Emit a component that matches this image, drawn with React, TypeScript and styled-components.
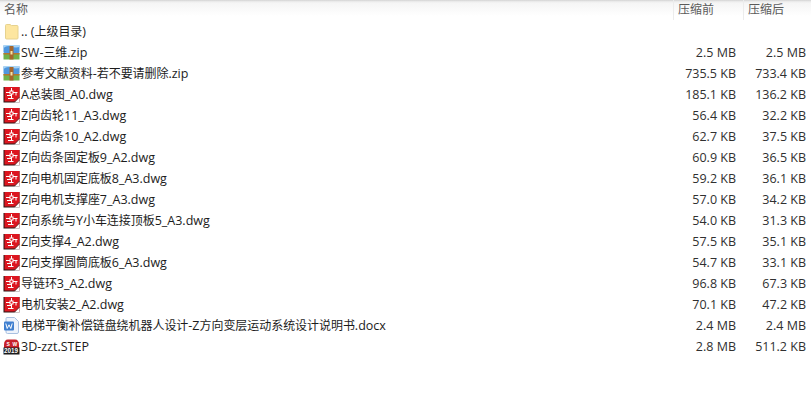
import React from "react";
import styled, { createGlobalStyle } from "styled-components";

const Global = createGlobalStyle`
  html, body { margin: 0; padding: 0; background: #fff; }
  body { font-family: "Open Sans", "Noto Sans CJK SC", sans-serif; }
`;

const Page = styled.div`
  width: 811px;
  height: 416px;
  overflow: hidden;
  background: #fff;
`;

const Header = styled.div`
  display: grid;
  grid-template-columns: 673px 70px 68px;
  height: 20px;
  background: linear-gradient(#cfcfcf 0, #e6e6e6 1px, #f5f5f5 3px, #fff 16px);
  color: #5a5a5a;
  font-size: 12px;
  line-height: 19px;
`;

const HeadCell = styled.div<{ $first?: boolean }>`
  padding-left: 4px;
  border-left: ${(p) => (p.$first ? "none" : "1px solid #ececec")};
`;

const List = styled.div`
  padding-top: 1px;
`;

const Row = styled.div`
  display: grid;
  grid-template-columns: 673px 63px 70px;
  height: 21px;
  line-height: 21px;
  font-size: 12.5px;
  color: #1c1c1c;
  white-space: nowrap;
`;

const NameCell = styled.div`
  display: flex;
  align-items: center;
  gap: 1px;
  padding-left: 3px;
`;

const Name = styled.span``;

const Han = styled.span`
  font-size: 12px;
  letter-spacing: -0.05px;
`;

const IconSlot = styled.svg`
  width: 17px;
  height: 17px;
  flex: none;
`;

const Size = styled.div`
  text-align: right;
  color: #303030;
`;

function FolderIcon() {
  return (
    <IconSlot viewBox="0 0 17 17">
      <path d="M2.5 2.5 a1 1 0 0 1 1-1 h3.5 l1.5 1 H14 a1 1 0 0 1 1 1 V15 a1 1 0 0 1-1 1 H3.5 a1 1 0 0 1-1-1 z" fill="#fde6a0" stroke="#e6d28f" />
    </IconSlot>
  );
}

function ZipIcon() {
  return (
    <IconSlot viewBox="0 0 17 17">
      <rect x="0.5" y="1" width="16" height="8" rx="1" fill="#4f97de" />
      <path d="M0.5 4 Q4 1 8 2.5 T16.5 3 V1 H0.5z" fill="#a9d4f5" />
      <rect x="0.5" y="9" width="16" height="6.5" fill="#6fb24b" />
      <rect x="0.5" y="9" width="16" height="1.5" fill="#b4772f" />
      <rect x="6.5" y="2" width="4" height="13.5" fill="#a5662c" />
      <rect x="7.5" y="7" width="2" height="3.5" fill="#f4e3a8" />
    </IconSlot>
  );
}

function DwgIcon() {
  return (
    <IconSlot viewBox="0 0 17 17">
      <rect x="0.5" y="1" width="16" height="15.5" fill="#2a1414" />
      <rect x="1.5" y="1" width="15" height="14.5" fill="#dc1620" />
      <path d="M8.5 2 V5 M8.5 8 V12.5 M3 6.5 H7 M10 6.5 H14.5 M5 12.5 H10.500 M13 6.5 V9.500 M4 9.500 H8.500" stroke="#fff" strokeWidth="1" fill="none" />
      <rect x="7" y="5" width="3" height="3" fill="none" stroke="#fff" strokeWidth="1" />
      <path d="M11.5 16.5 L16.5 11.5 V16.5z" fill="#fff" />
      <path d="M11.5 16 L16.5 11" stroke="#444" strokeWidth="0.8" />
    </IconSlot>
  );
}

function DocIcon() {
  return (
    <IconSlot viewBox="0 0 17 17">
      <path d="M3 1.5 a1 1 0 0 1 1-1 H11.5 L15.5 4.5 V15 a1.5 1.5 0 0 1-1.5 1.5 H4.5 a1.5 1.5 0 0 1-1.5-1.5z" fill="#eef3fb" stroke="#a9c0e0" />
      <rect x="1" y="4.5" width="10" height="9" rx="1" fill="#3f7fd0" />
      <path d="M2.8 6.5 L4.2 11.5 L6 7.8 L7.8 11.5 L9.2 6.5" stroke="#fff" strokeWidth="1" fill="none" />
    </IconSlot>
  );
}

const IconLabel = styled.text`
  font-family: "Liberation Sans", sans-serif;
  font-weight: 700;
  fill: #fff;
`;

function StepIcon() {
  return (
    <IconSlot viewBox="0 0 17 17">
      <path d="M1 7 Q1 1.5 5 1.5 H12 Q16 1.5 16 7 V10 H1z" fill="#c8202a" />
      <IconLabel x="3.5" y="8" fontSize="5">S</IconLabel>
      <IconLabel x="9.5" y="8" fontSize="5">W</IconLabel>
      <rect x="0.5" y="9.5" width="16" height="7" fill="#1a1a1a" />
      <IconLabel x="1" y="15.3" fontSize="6.3">2019</IconLabel>
    </IconSlot>
  );
}

const icons = { folder: FolderIcon, zip: ZipIcon, dwg: DwgIcon, doc: DocIcon, step: StepIcon };

type Kind = keyof typeof icons;

const rows: [Kind, string, string, string][] = [
  ["folder", ".. (上级目录)", "", ""],
  ["zip", "SW-三维.zip", "2.5 MB", "2.5 MB"],
  ["zip", "参考文献资料-若不要请删除.zip", "735.5 KB", "733.4 KB"],
  ["dwg", "A总装图_A0.dwg", "185.1 KB", "136.2 KB"],
  ["dwg", "Z向齿轮11_A3.dwg", "56.4 KB", "32.2 KB"],
  ["dwg", "Z向齿条10_A2.dwg", "62.7 KB", "37.5 KB"],
  ["dwg", "Z向齿条固定板9_A2.dwg", "60.9 KB", "36.5 KB"],
  ["dwg", "Z向电机固定底板8_A3.dwg", "59.2 KB", "36.1 KB"],
  ["dwg", "Z向电机支撑座7_A3.dwg", "57.0 KB", "34.2 KB"],
  ["dwg", "Z向系统与Y小车连接顶板5_A3.dwg", "54.0 KB", "31.3 KB"],
  ["dwg", "Z向支撑4_A2.dwg", "57.5 KB", "35.1 KB"],
  ["dwg", "Z向支撑圆筒底板6_A3.dwg", "54.7 KB", "33.1 KB"],
  ["dwg", "导链环3_A2.dwg", "96.8 KB", "67.3 KB"],
  ["dwg", "电机安装2_A2.dwg", "70.1 KB", "47.2 KB"],
  ["doc", "电梯平衡补偿链盘绕机器人设计-Z方向变层运动系统设计说明书.docx", "2.4 MB", "2.4 MB"],
  ["step", "3D-zzt.STEP", "2.8 MB", "511.2 KB"],
];

function MixedName({ text }: { text: string }) {
  const parts = text.split(/([\u4e00-\u9fff]+)/).filter(Boolean);
  return (
    <Name>
      {parts.map((part, i) =>
        /[\u4e00-\u9fff]/.test(part) ? <Han key={i}>{part}</Han> : <React.Fragment key={i}>{part}</React.Fragment>
      )}
    </Name>
  );
}

export default function App() {
  return (
    <Page>
      <Global />
      <Header>
        <HeadCell $first>名称</HeadCell>
        <HeadCell>压缩前</HeadCell>
        <HeadCell>压缩后</HeadCell>
      </Header>
      <List>
        {rows.map(([kind, name, before, after]) => {
          const Icon = icons[kind];
          return (
            <Row key={name}>
              <NameCell>
                <Icon />
                <MixedName text={name} />
              </NameCell>
              <Size>{before}</Size>
              <Size>{after}</Size>
            </Row>
          );
        })}
      </List>
    </Page>
  );
}
